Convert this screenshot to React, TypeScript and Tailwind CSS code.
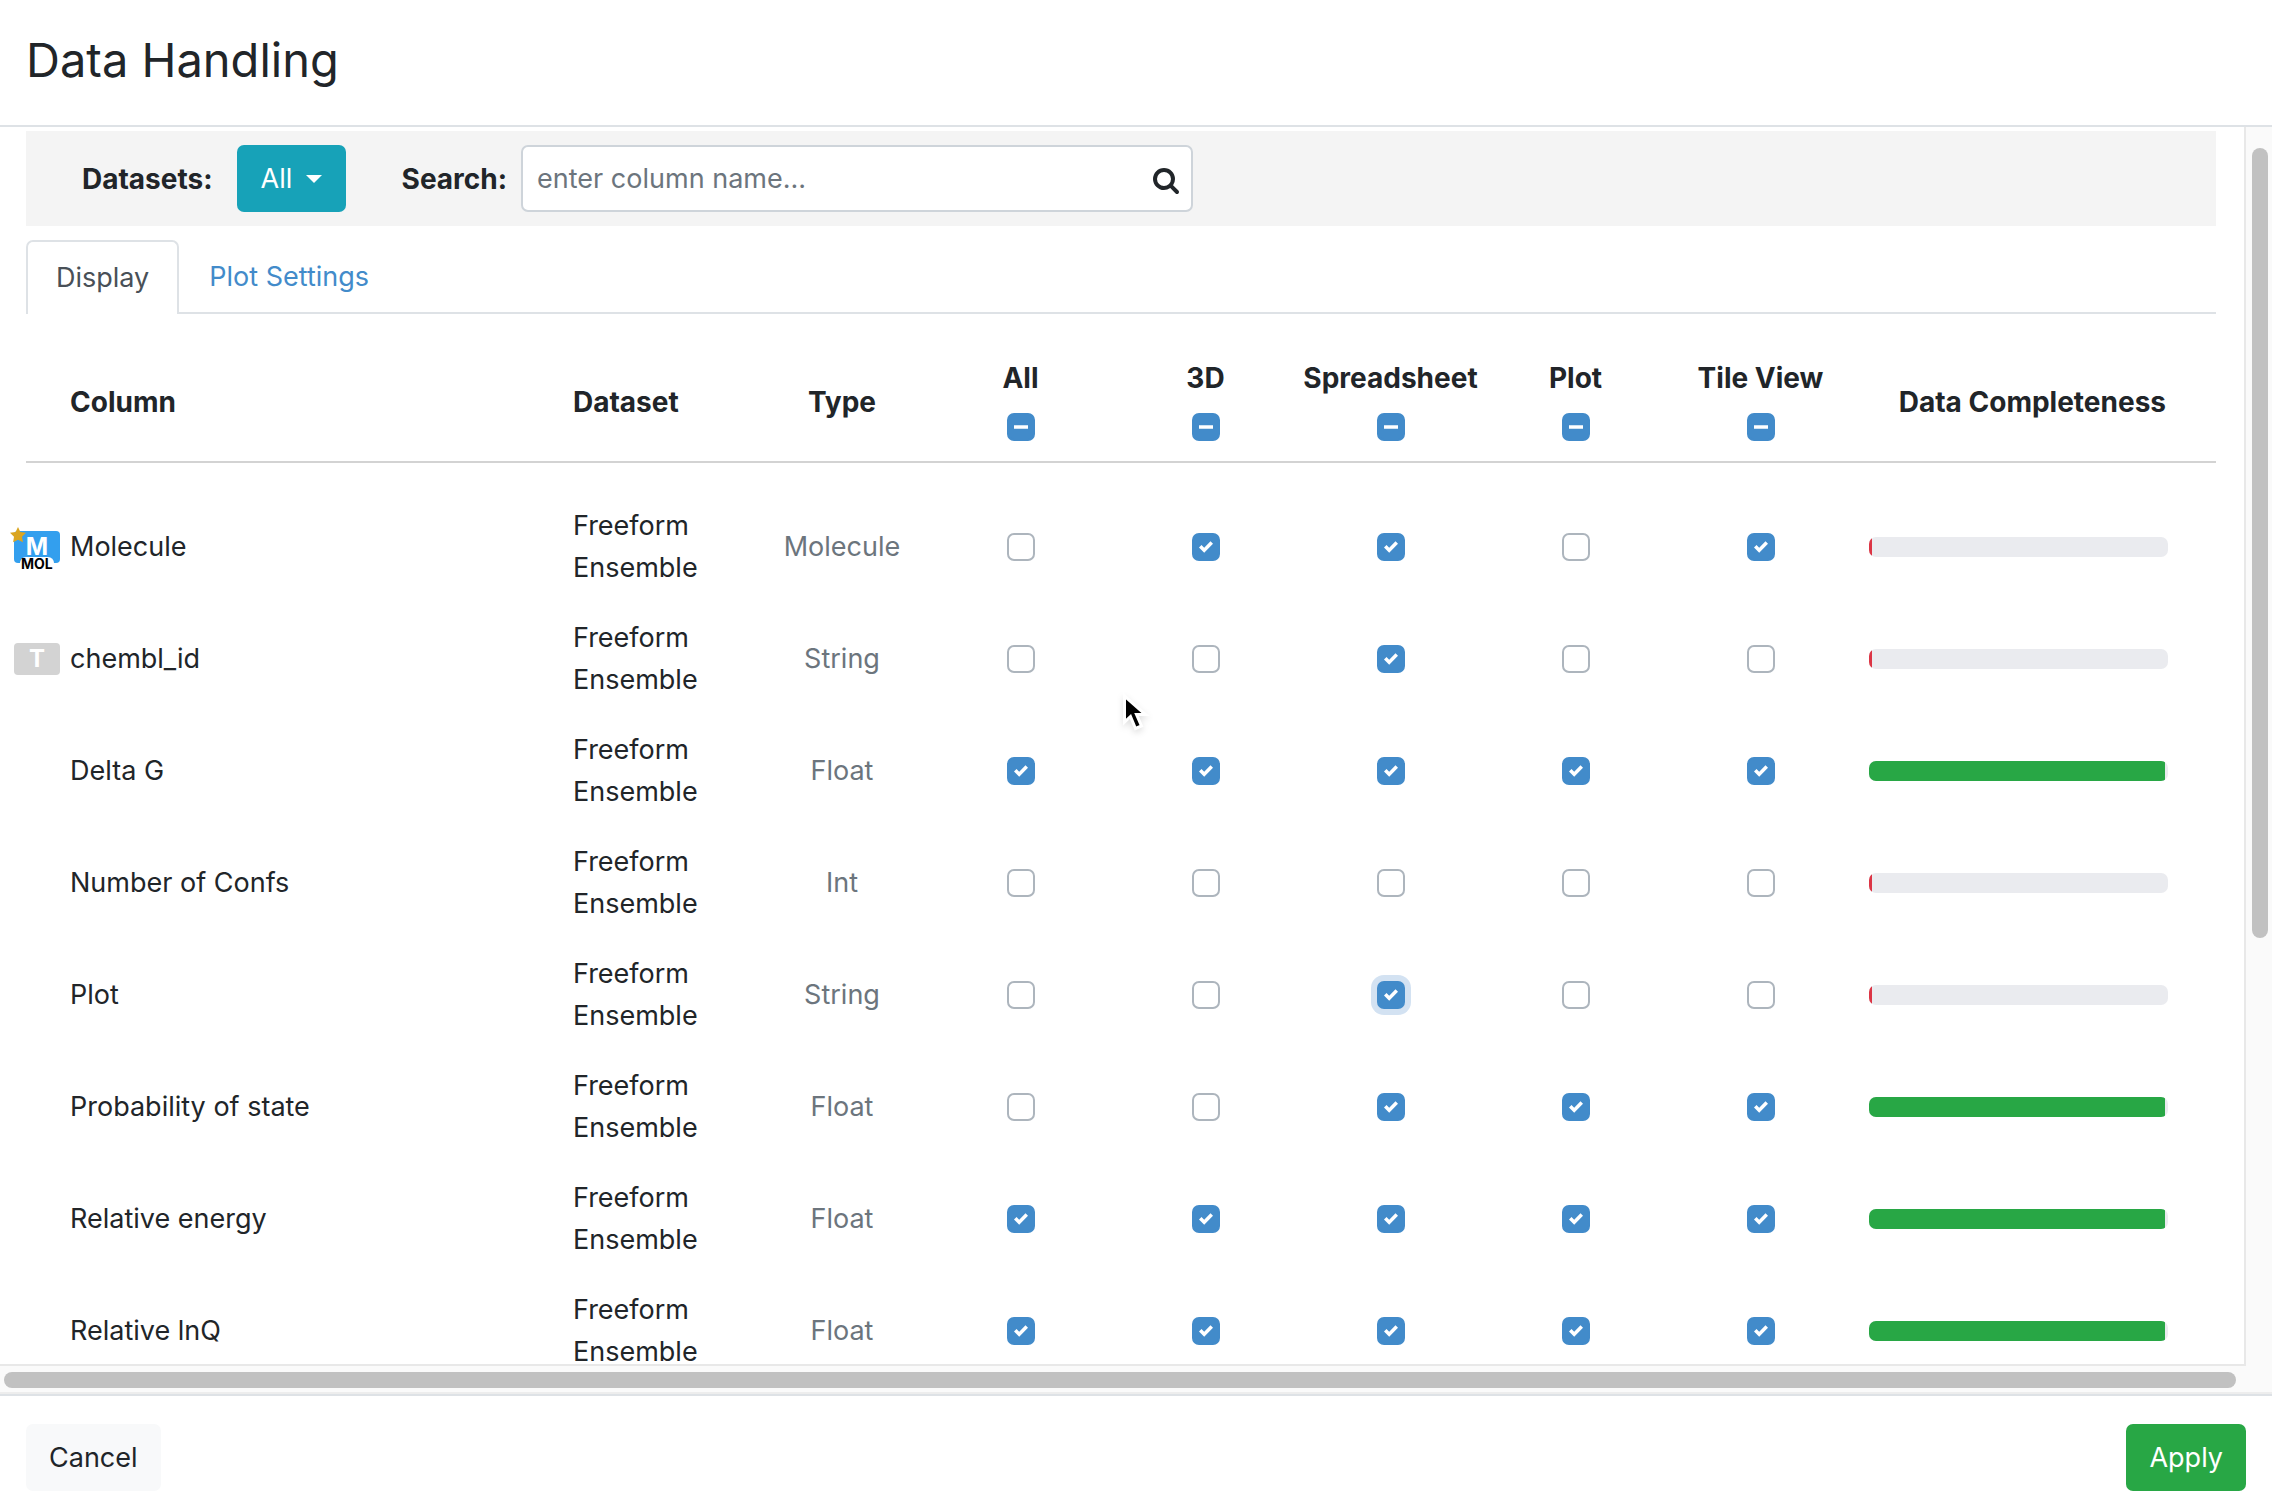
import { useState } from "react";

type Row = {
  name: string;
  type: string;
  checks: boolean[];
  complete: boolean;
  icon?: "mol" | "text";
  focused?: number;
};

const views = ["All", "3D", "Spreadsheet", "Plot", "Tile View"];

const initialRows: Row[] = [
  { name: "Molecule", type: "Molecule", checks: [false, true, true, false, true], complete: false, icon: "mol" },
  { name: "chembl_id", type: "String", checks: [false, false, true, false, false], complete: false, icon: "text" },
  { name: "Delta G", type: "Float", checks: [true, true, true, true, true], complete: true },
  { name: "Number of Confs", type: "Int", checks: [false, false, false, false, false], complete: false },
  { name: "Plot", type: "String", checks: [false, false, true, false, false], complete: false, focused: 2 },
  { name: "Probability of state", type: "Float", checks: [false, false, true, true, true], complete: true },
  { name: "Relative energy", type: "Float", checks: [true, true, true, true, true], complete: true },
  { name: "Relative lnQ", type: "Float", checks: [true, true, true, true, true], complete: true },
];

type CheckboxProps = {
  label: string;
  checked: boolean;
  mixed?: boolean;
  focused?: boolean;
  onChange?: () => void;
};

function Checkbox({ label, checked, mixed, focused, onChange }: CheckboxProps) {
  return (
    <label className="relative block size-7">
      <input
        type="checkbox"
        aria-label={label}
        checked={checked}
        onChange={onChange}
        ref={(el) => {
          if (el) el.indeterminate = Boolean(mixed);
        }}
        className={`block size-7 appearance-none rounded-[7px] border-2 ${
          checked || mixed ? "border-[#428bca] bg-[#428bca]" : "border-[#adb5bd] bg-white"
        } ${focused ? "ring-6 ring-[#d3e2f2]" : ""}`}
      />
      {mixed && (
        <svg viewBox="0 0 4 4" className="pointer-events-none absolute inset-[7px] size-[14px]" aria-hidden="true">
          <path stroke="#fff" d="M0 2h4" />
        </svg>
      )}
      {checked && !mixed && (
        <svg viewBox="0 0 8 8" className="pointer-events-none absolute inset-[7px] size-[14px]" aria-hidden="true">
          <path fill="#fff" d="M6.564.75l-3.59 3.612-1.538-1.55L0 4.26 2.974 7.25 8 2.193z" />
        </svg>
      )}
    </label>
  );
}

function ColumnIcon({ kind }: { kind?: "mol" | "text" }) {
  if (!kind) return <span className="w-[46px] shrink-0" />;
  if (kind === "text") {
    return (
      <span className="flex h-8 w-[46px] shrink-0 items-center justify-center rounded bg-[#d3d3d3] text-2xl font-bold text-white">
        T
      </span>
    );
  }
  return (
    <span className="relative flex h-8 w-[46px] shrink-0 items-center justify-center rounded bg-[#339fee] text-2xl font-bold text-white">
      M
      <span className="absolute top-[26px] left-[6px] rounded-t-md bg-white px-px text-[14px] leading-[14px] font-bold text-black">
        MOL
      </span>
      <svg viewBox="0 0 24 24" className="absolute -top-[4px] -left-[4px] size-4" aria-hidden="true">
        <path
          fill="#daa520"
          d="M12 0l3.600 7.600 8.400 1.200-6 5.900 1.400 8.300L12 19l-7.400 4L6 14.700 0 8.800l8.400-1.200z"
        />
      </svg>
    </span>
  );
}

export default function App() {
  const [rows, setRows] = useState(initialRows);
  const [search, setSearch] = useState("");

  const toggle = (rowIndex: number, viewIndex: number) => {
    setRows((current) =>
      current.map((row, i) =>
        i === rowIndex ? { ...row, checks: row.checks.map((c, j) => (j === viewIndex ? !c : c)) } : row,
      ),
    );
  };

  return (
    <div className="relative flex h-screen flex-col overflow-hidden bg-white font-['Inter','Liberation_Sans',sans-serif] text-[27px] leading-[42px] text-[#212529]">
      <header className="flex h-[127px] shrink-0 items-start border-b-2 border-[#dee2e6] px-[26px] pt-7">
        <h1 className="text-[47px] leading-[63px] font-normal">Data Handling</h1>
      </header>

      <div className="flex min-h-0 flex-1">
        <main className="min-w-0 flex-1 overflow-hidden pt-1 pr-7 pl-[26px]">
          <div className="flex h-[95px] items-center bg-[#f4f4f4] pl-14">
            <span className="text-[28px] font-bold">Datasets:</span>
            <button
              type="button"
              className="ml-6 flex h-[67px] w-[109px] items-center justify-between rounded-[7px] bg-[#17a2b8] px-6 text-white"
            >
              All
              <svg viewBox="0 0 16 8" className="h-2 w-4" aria-hidden="true">
                <path fill="#fff" d="M0 0h16L8 8z" />
              </svg>
            </button>
            <label htmlFor="column-search" className="ml-14 text-[28px] font-bold">
              Search:
            </label>
            <div className="relative ml-3.5 w-[672px]">
              <input
                id="column-search"
                type="text"
                value={search}
                onChange={(e) => setSearch(e.target.value)}
                placeholder="enter column name..."
                className="block h-[67px] w-full rounded-[7px] border-2 border-[#ced4da] bg-white pr-14 pl-3.5 placeholder:text-[#6c757d]"
              />
              <svg viewBox="0 0 1664 1792" className="absolute top-[21px] right-3.5 h-7 w-[26px]" aria-hidden="true">
                <path
                  fill="#212529"
                  d="M1152 832q0-185-131.500-316.500T704 384 387.500 515.500 256 832t131.500 316.500T704 1280t316.500-131.500T1152 832zm512 832q0 52-38 90t-90 38q-54 0-90-38l-343-342q-179 124-399 124-143 0-273.500-55.500t-225-150-150-225T0 832t55.500-273.500 150-225 225-150T704 128t273.500 55.500 225 150 150 225T1408 832q0 220-124 399l343 343q37 37 37 90z"
                />
              </svg>
            </div>
          </div>

          <nav className="mt-3.5 flex border-b-2 border-[#dee2e6]">
            <a
              href="#display"
              className="-mb-0.5 flex h-[74px] items-center rounded-t-[7px] border-2 border-b-0 border-[#dee2e6] bg-white px-7 text-[#495057]"
            >
              Display
            </a>
            <a href="#plot-settings" className="-mb-0.5 flex h-[74px] items-center px-[30px] text-[#428bca]">
              Plot Settings
            </a>
          </nav>

          <table className="w-full table-fixed border-collapse">
            <colgroup>
              <col />
              <col className="w-[199px]" />
              <col className="w-[172px]" />
              <col className="w-[185px]" />
              <col className="w-[185px]" />
              <col className="w-[185px]" />
              <col className="w-[185px]" />
              <col className="w-[185px]" />
              <col className="w-[363px]" />
            </colgroup>
            <thead className="text-[28px]">
              <tr className="h-[148px] border-b-2 border-[#d3d3d3]">
                <th className="pt-7 pl-11 text-left font-bold">Column</th>
                <th className="pt-7 pl-4 text-left font-bold">Dataset</th>
                <th className="pt-7 font-bold">Type</th>
                {views.map((view) => (
                  <th key={view} className="pt-[22px] font-bold">
                    <div className="flex flex-col items-center gap-3.5">
                      <span className="whitespace-nowrap">{view}</span>
                      <Checkbox label={`Toggle ${view} for every column`} checked={false} mixed />
                    </div>
                  </th>
                ))}
                <th className="pt-7 pr-[50px] text-right font-bold whitespace-nowrap">Data Completeness</th>
              </tr>
            </thead>
            <tbody className="before:block before:h-7">
              {rows.map((row, rowIndex) => (
                <tr key={row.name} className="h-28">
                  <td>
                    <div className="-ml-3 flex items-center gap-2.5">
                      <ColumnIcon kind={row.icon} />
                      <span className="whitespace-nowrap">{row.name}</span>
                    </div>
                  </td>
                  <td className="pl-4">Freeform Ensemble</td>
                  <td className="text-center text-[#6c757d]">{row.type}</td>
                  {row.checks.map((checked, viewIndex) => (
                    <td key={views[viewIndex]}>
                      <div className="flex justify-center">
                        <Checkbox
                          label={`${row.name}: ${views[viewIndex]}`}
                          checked={checked}
                          focused={row.focused === viewIndex}
                          onChange={() => toggle(rowIndex, viewIndex)}
                        />
                      </div>
                    </td>
                  ))}
                  <td className="pr-12 pl-4">
                    <div className="h-5 overflow-hidden rounded-[7px] bg-[#eaebef]">
                      <div className={row.complete ? "h-full w-[99%] bg-[#28a745]" : "h-full w-[1%] bg-[#dc3545]"} />
                    </div>
                  </td>
                </tr>
              ))}
            </tbody>
          </table>
        </main>

        <div className="w-7 shrink-0 border-l-2 border-[#e8e8e8] bg-[#fafafa] pt-[21px] pl-1.5">
          <div className="h-[65%] w-4 rounded-full bg-[#c1c1c1]" />
        </div>
      </div>

      <div className="flex h-[30px] shrink-0 border-b-2 border-[#ededed] bg-[#fafafa]">
        <div className="flex-1 border-t-2 border-[#e8e8e8] pt-1.5 pr-2.5 pl-1">
          <div className="h-4 rounded-full bg-[#c1c1c1]" />
        </div>
        <div className="w-[26px]" />
      </div>

      <footer className="flex h-[106px] shrink-0 items-start justify-between border-t-2 border-[#dee2e6] px-[26px] pt-7">
        <button type="button" className="h-[67px] rounded-[7px] bg-[#f8f9fa] px-[23px]">
          Cancel
        </button>
        <button type="button" className="h-[67px] rounded-[7px] bg-[#28a745] px-[23px] text-white">
          Apply
        </button>
      </footer>

      {/* Pointer */}
      <svg
        viewBox="0 0 28 42"
        className="pointer-events-none absolute top-[692px] left-[1122px] h-[42px] w-7 drop-shadow-md"
        aria-hidden="true"
      >
        <path
          fill="#000"
          stroke="#fff"
          strokeWidth="3"
          d="M2.500 4v26l6-5.500 5 12 6-2.500-5-11.500h9z"
        />
      </svg>
    </div>
  );
}
